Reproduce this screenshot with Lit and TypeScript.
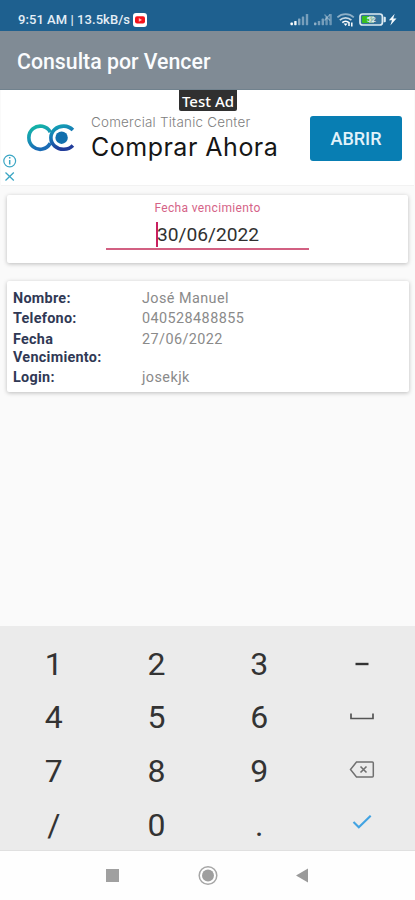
import { LitElement, html, svg, css } from "lit";
import { customElement } from "lit/decorators.js";

@customElement("status-bar")
class StatusBar extends LitElement {
  static styles = css`
    :host { display: flex; height: 31px; background: #1e608f; color: #e4eef6; align-items: flex-start; justify-content: space-between; }
    .left { display: flex; padding: 12px 0 0 18px; align-items: center; height: 15px; font: 500 13px/15px Roboto, sans-serif; white-space: pre; }
    .clock { width: 113px; letter-spacing: .06px; }
    .yt { margin-left: 2px; }
    .right { display: block; margin: 10px 14px 0 0; }
    svg { display: block; }
    .level { font: 500 8px Roboto, sans-serif; fill: #e6f0f5; }
  `;
  render() {
    const bar = (x: number, top: number, o: number) =>
      svg`<rect x=${x} y=${top} width="2.4" height=${15.2 - top} rx=".6" fill="#fff" opacity=${o}></rect>`;
    return html`
      <div class="left"><span class="clock">9:51 AM | 13.5kB/s</span>
        <svg class="yt" width="14" height="14" viewBox="0 0 14 14"><rect width="14" height="14" rx="3" fill="#fff"/><rect x="2" y="3.2" width="10" height="7.4" rx="2" fill="#f5141c"/><path d="M5.8 5v3.8L9 6.9z" fill="#fbb"/></svg>
      </div>
      <svg class="right" width="112" height="20" viewBox="0 0 112 20">
        ${bar(1.5, 12.6, 1)}${bar(5.2, 11, 0.95)}${bar(9, 8.6, 0.45)}${bar(12.8, 6.4, 0.4)}${bar(16.8, 4, 0.4)}
        ${bar(25, 12.6, 0.5)}${bar(28.8, 11, 0.4)}${bar(32.6, 8.6, 0.4)}${bar(36.4, 6.4, 0.35)}${bar(40.4, 4, 0.35)}
        <path d="M35.5 4.5l5.5 6M41 4.5l-5.5 6" stroke="#fff" stroke-width="1.2" opacity=".35"/>
        <g fill="none" stroke="#fff" stroke-width="1.7">
          <path d="M48.4 7.4a12 12 0 0 1 16.4 0" opacity=".5"/>
          <path d="M50.8 10.2a8.5 8.5 0 0 1 11.6 0" opacity=".75"/>
          <path d="M53.3 12.7a4.8 4.8 0 0 1 6.6 0"/>
        </g>
        <path d="M54.6 13.6h4l-2 2.3z" fill="#fff"/>
        <path d="M60 12v4M62.8 12.5v4" stroke="#fff" stroke-width="1.5"/>
        <rect x="71" y="4" width="22.4" height="11" rx="2.6" fill="#34729b" stroke="#dceaf2" stroke-width="1.7"/>
        <rect x="73" y="6" width="7" height="7" rx="1" fill="#39bf20"/>
        <rect x="80" y="6" width="5" height="7" fill="#91bda8"/>
        <text class="level" x="77.6" y="12.3">52</text>
        <path d="M94.6 6.8h1.2q1 0 1 1v3.4q0 1-1 1h-1.2" fill="#dceaf2"/>
        <path d="M105.7 3.8l-5.8 6.5h3.1l-1.7 5.3 6.2-7.1h-3.3z" fill="#f3f9fd"/>
      </svg>`;
  }
}

@customElement("ad-banner")
class AdBanner extends LitElement {
  static styles = css`
    :host { display: flex; position: relative; margin: 0 1px; background: #fff; border-bottom: 1px solid #f2f2f2; font-family: Roboto, sans-serif; box-sizing: border-box; height: 96px; }
    svg { display: block; }
    .marks { width: 17px; padding: 64px 0 0 1px; box-sizing: border-box; }
    .logo { margin: 32px 0 0 7px; }
    .copy { margin: 24px 0 0 16px; width: 219px; white-space: nowrap; }
    .brand { font: 300 13.4px/16px Inter, sans-serif; letter-spacing: 0.24px; color: #808080; }
    .offer { font: 400 25px/30px Inter, sans-serif; color: #161616; margin-top: 2px; letter-spacing: .5px; }
    .cta { width: 92px; height: 45px; margin-top: 25.5px; border: 0; padding: 0; border-radius: 3px; background: #087eb3; color: #e2f2fa; font: 500 18px/45px Roboto, sans-serif; text-align: center; }
    .tag { position: absolute; top: 0; left: 178px; width: 58px; height: 21px; border-radius: 0 0 2px 2px; background: #303030; color: #fff; font: 500 15px/22px "Noto Sans", sans-serif; text-align: center; white-space: nowrap; }
  `;
  render() {
    return html`
      <div class="marks">
        <svg width="16" height="28" viewBox="0 0 16 28" fill="none" stroke="#3ba6c4" stroke-width="1.2">
          <circle cx="7.7" cy="7" r="5.9"/><path d="M7.7 6v4.5M7.7 3v1.5" stroke-width="1.5"/><path d="M3.5 18.5l8.3 8M11.8 18.5l-8.3 8" stroke-width="1.3"/>
        </svg>
      </div>
      <svg class="logo" width="50" height="32" viewBox="0 0 50 32">
        <defs>
          <linearGradient id="a" x1="0" y1="0" x2=".3" y2="1"><stop offset="0" stop-color="#13b8a4"/><stop offset=".55" stop-color="#1795b5"/><stop offset="1" stop-color="#1a6bb5"/></linearGradient>
          <linearGradient id="b" x1="0" y1="0" x2=".3" y2="1"><stop offset="0" stop-color="#12a6b4"/><stop offset=".5" stop-color="#1874b5"/><stop offset="1" stop-color="#213c9a"/></linearGradient>
        </defs>
        <path d="M25.3 10.2A11.4 11.6 0 1 0 25.3 21.2" fill="none" stroke="url(#a)" stroke-width="3.6"/>
        <path d="M47.9 8A12.6 11.6 0 1 0 47.9 23.4" fill="none" stroke="url(#b)" stroke-width="3.6"/>
        <circle cx="36.6" cy="15.7" r="6.2" fill="#126fad"/>
      </svg>
      <div class="copy"><div class="brand">Comercial Titanic Center</div><div class="offer">Comprar Ahora</div></div>
      <button class="cta">ABRIR</button>
      <div class="tag">Test Ad</div>`;
  }
}

@customElement("date-field")
class DateField extends LitElement {
  static styles = css`
    :host { display: flex; flex-direction: column; align-items: center; height: 68px; margin: 9px 7px 0; background: #fff; border-radius: 2px; box-shadow: 0 1px 4px rgba(0,0,0,.25); font-family: Roboto, sans-serif; }
    .label { margin-top: 6px; font-size: 12px; line-height: 14px; letter-spacing: .35px; color: #d56387; }
    .value { display: flex; justify-content: center; align-items: center; box-sizing: border-box; width: 203px; height: 35px; padding-top: 5px; border-bottom: 2px solid #d26082; color: #303030; font-size: 19.2px; }
    .caret { width: 2px; height: 25px; margin-right: -1px; background: #c92060; }
  `;
  render() {
    return html`<div class="label">Fecha vencimiento</div><div class="value"><span class="caret"></span><span>30/06/2022</span></div>`;
  }
}

@customElement("client-card")
class ClientCard extends LitElement {
  static styles = css`
    :host { display: grid; grid-template-columns: 129px 1fr; row-gap: 2.2px; align-content: start; box-sizing: border-box; height: 111px; margin: 18px 6px 0 7px; padding: 9.2px 6px 0; background: #fff; border-radius: 2px; box-shadow: 0 1px 4px rgba(0,0,0,.25); font: 400 14.4px/18px Roboto, sans-serif; }
    .key { width: 110px; font-weight: 700; color: #303955; letter-spacing: .28px; }
    .val { color: #8a8a8a; letter-spacing: .43px; }
  `;
  render() {
    const rows = [["Nombre:", "José Manuel"], ["Telefono:", "040528488855"], ["Fecha Vencimiento:", "27/06/2022"], ["Login:", "josekjk"]];
    return rows.map(([k, v]) => html`<div class="key">${k}</div><div class="val">${v}</div>`);
  }
}

@customElement("num-pad")
class NumPad extends LitElement {
  static styles = css`
    :host { display: grid; grid-template: repeat(4, 53.6px) / repeat(4, 102.7px); box-sizing: border-box; height: 225px; padding: 11px 0 0 2.5px; background: #ebebeb; border-bottom: 1px solid #e0e0e0; font: 400 32px/54px Roboto, sans-serif; color: #333; }
    .key { display: flex; align-items: center; justify-content: center; }
    svg { display: block; }
  `;
  render() {
    const dash = html`<svg width="26" height="20" viewBox="0 0 26 20"><path d="M6.5 10h13" stroke="#333" stroke-width="2.4"/></svg>`;
    const space = html`<svg width="26" height="20" viewBox="0 0 26 20"><path d="M2 6.5v5h22v-5" fill="none" stroke="#555" stroke-width="1.7"/></svg>`;
    const back = html`<svg width="26" height="20" viewBox="0 0 26 20" fill="none" stroke="#707070"><path d="M7.5 1h15.8q1 0 1 1v13q0 1-1 1H7.5L1.5 8.5z" stroke-width="1.5"/><path d="M11.5 5.5l6 6M17.5 5.5l-6 6" stroke-width="1.6"/></svg>`;
    const ok = html`<svg width="26" height="20" viewBox="0 0 26 20"><path d="M4.5 7l5.3 5.3L21.7.7" fill="none" stroke="#42a3e2" stroke-width="2.1"/></svg>`;
    const keys = ["1", "2", "3", dash, "4", "5", "6", space, "7", "8", "9", back, "/", "0", ".", ok];
    return keys.map((k) => html`<div class="key">${k}</div>`);
  }
}

@customElement("app-root")
class AppRoot extends LitElement {
  static styles = css`
    :host { display: flex; flex-direction: column; width: 415px; height: 900px; background: #fafafa; overflow: hidden; }
    .title { height: 59px; box-sizing: border-box; padding-left: 17px; background: #808b95; color: #fafcfe; font: 500 21.3px/62px Roboto, sans-serif; border-bottom: 1px solid #71828e; }
    .fill { flex: 1; }
    .nav { display: flex; height: 49px; background: #fefefe; }
    svg { display: block; }
  `;
  render() {
    return html`
      <status-bar></status-bar>
      <div class="title">Consulta por Vencer</div>
      <ad-banner></ad-banner>
      <date-field></date-field>
      <client-card></client-card>
      <div class="fill"></div>
      <num-pad></num-pad>
      <div class="nav">
        <svg width="415" height="49" viewBox="0 0 415 49">
          <rect x="106" y="18" width="13" height="13" fill="#a0a0a0"/>
          <circle cx="208" cy="24.5" r="8.8" fill="none" stroke="#a6a6a6" stroke-width="1.5"/><circle cx="208" cy="24.5" r="6" fill="#9e9e9e"/>
          <path d="M308 17.5v14L296 24.5z" fill="#9a9a9a"/>
        </svg>
      </div>`;
  }
}
